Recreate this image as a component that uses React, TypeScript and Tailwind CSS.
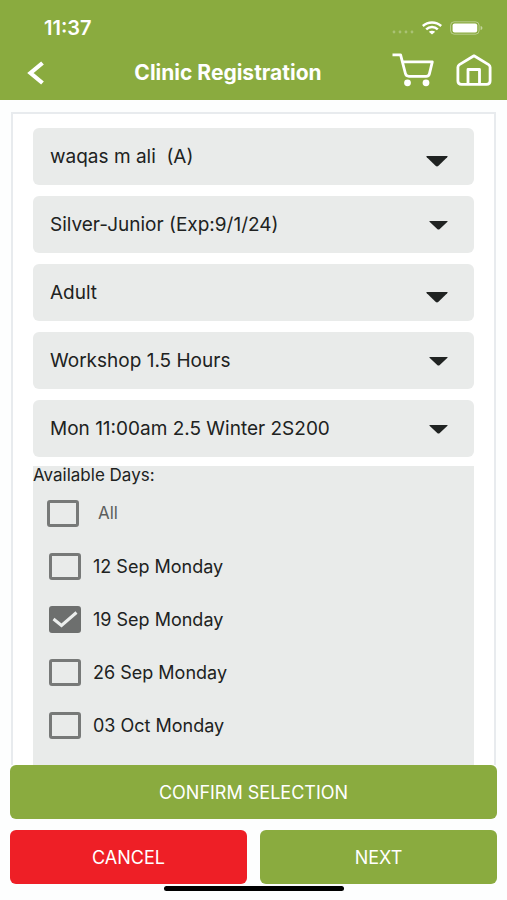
import { useState } from "react";

interface Field {
  id: string;
  label: string;
  value: string;
  bigArrow?: boolean;
}

const fields: Field[] = [
  { id: "member", label: "Member", value: "waqas m ali \u00a0(A)", bigArrow: true },
  { id: "membership", label: "Membership", value: "Silver-Junior (Exp:9/1/24)" },
  { id: "age", label: "Age group", value: "Adult", bigArrow: true },
  { id: "workshop", label: "Workshop", value: "Workshop 1.5 Hours" },
  { id: "session", label: "Session", value: "Mon 11:00am 2.5 Winter 2S200" },
];

const days = ["12 Sep Monday", "19 Sep Monday", "26 Sep Monday", "03 Oct Monday"];

const StatusBar = () => (
  <div className="flex items-center justify-between pl-11 pr-6 pt-4">
    <span className="text-[20px] leading-6 font-semibold">11:37</span>
    <div className="flex items-center gap-2">
      <svg width="22" height="14" viewBox="0 0 22 14" fill="#fff" fillOpacity="0.28">
        <circle cx="2" cy="11" r="1.4" />
        <circle cx="8" cy="11" r="1.4" />
        <circle cx="14" cy="11" r="1.4" />
        <circle cx="20" cy="11" r="1.4" />
      </svg>
      <svg width="20" height="14" viewBox="0 0 20 14" fill="none" stroke="#fff" strokeWidth="2.5">
        <path d="M0.8 5C6 0.3 14 0.3 19.2 5" />
        <path d="M4.2 8.4C7.6 5.2 12.4 5.2 15.8 8.4" />
        <path d="M10 13.5L6.8 10.8C8.6 9.3 11.4 9.3 13.2 10.8Z" fill="#fff" stroke="none" />
      </svg>
      <svg width="33" height="14" viewBox="0 0 33 14" fill="none">
        <rect x="0.6" y="0.8" width="28.5" height="12.4" rx="3.6" stroke="#fff" strokeOpacity="0.4" />
        <rect x="2.6" y="2.6" width="24.6" height="8.8" rx="2" fill="#fff" />
        <path d="M30.6 5v4c1.2-.4 1.8-1.1 1.8-2s-.6-1.6-1.8-2z" fill="#fff" fillOpacity="0.5" />
      </svg>
    </div>
  </div>
);

const Header = () => (
  <header className="bg-[#8aab3f] text-white">
    <StatusBar />
    <div className="flex items-center h-[60px] pl-5 pr-[15px] pt-[6px]">
      <button type="button" aria-label="Back" className="w-8 h-8 flex items-center justify-center">
        <svg width="18" height="24" viewBox="0 0 18 24" fill="none" stroke="#fff" strokeWidth="4.2">
          <path d="M15.5 2L3.5 12L15.5 22" />
        </svg>
      </button>
      <h1 className="flex-1 pl-3 text-center text-[21px] leading-6 font-bold">Clinic Registration</h1>
      <div className="flex items-center gap-5 mb-[6px]">
        <button type="button" aria-label="Cart">
          <svg width="44" height="34" viewBox="0 0 44 34" fill="none" stroke="#fff" strokeWidth="2.8" strokeLinejoin="round">
            <path d="M0.5 1.8H8.6L13.4 20.5Q14.1 23.3 17 23.3H34.2Q37 23.3 37.500 20.500L40.3 8.900H10.600" />
            <circle cx="15.5" cy="29.8" r="3.4" fill="#fff" stroke="none" />
            <circle cx="34" cy="29.8" r="3.4" fill="#fff" stroke="none" />
          </svg>
        </button>
        <button type="button" aria-label="Home">
          <svg width="36" height="32" viewBox="0 0 36 32" fill="none" stroke="#fff" strokeWidth="2.8" strokeLinejoin="round">
            <path d="M18 1.8L3.4 10.6Q1.9 11.6 1.9 13.3V27Q1.9 30.3 5.6 30.3H30.4Q34.1 30.3 34.1 27V13.3Q34.1 11.6 32.6 10.6Z" />
            <path d="M12 30V15.5H23.5V30" />
          </svg>
        </button>
      </div>
    </div>
  </header>
);

const SelectField = ({ field }: { field: Field }) => (
  <div className="relative">
    <select
      id={field.id}
      aria-label={field.label}
      className="appearance-none block w-full h-[57px] rounded-md bg-[#e9ebea] pt-[2px] pl-[17px] pr-14 text-[19px] text-[#202221]"
    >
      <option>{field.value}</option>
    </select>
    <div className="absolute inset-y-0 right-[26px] flex items-center pointer-events-none">
      {field.bigArrow ? (
        <svg width="22" height="20" viewBox="0 0 22 20" fill="#202322">
          <path d="M1 9H21Q22.4 9 21.2 10.2L12.2 19.1Q11 20 9.8 19.1L0.8 10.2Q-0.4 9 1 9Z" />
        </svg>
      ) : (
        <svg width="19" height="13" viewBox="0 0 19 13" fill="#202322">
          <path d="M1 3H18Q19.4 3 18.2 4.1L10.5 11.2Q9.5 12 8.5 11.2L0.8 4.1Q-0.4 3 1 3Z" />
        </svg>
      )}
    </div>
  </div>
);

interface DayCheckProps {
  label: string;
  checked: boolean;
  onChange: () => void;
}

const DayCheck = ({ label, checked, onChange }: DayCheckProps) => (
  <label className="flex items-center gap-3 h-[53px] pl-4 text-[18px] text-[#202221]">
    <span className="relative">
      <input
        type="checkbox"
        checked={checked}
        onChange={onChange}
        className="appearance-none block w-8 h-[27px] rounded-[3px] border-3 border-[#777978] checked:bg-[#6d6f6e] checked:border-[#6d6f6e]"
      />
      {checked && (
        <svg className="absolute inset-0 pointer-events-none" width="32" height="27" viewBox="0 0 32 27" fill="none" stroke="#eceeed" strokeWidth="3">
          <path d="M4.5 13L12.5 19.5L27.5 6.5" />
        </svg>
      )}
    </span>
    {label}
  </label>
);

export default function App() {
  const [selected, setSelected] = useState<string[]>(["19 Sep Monday"]);
  const allChecked = selected.length === days.length;

  const toggleDay = (day: string) => {
    setSelected((prev) =>
      prev.includes(day) ? prev.filter((d) => d !== day) : [...prev, day]
    );
  };

  return (
    <div
      className="min-h-screen flex flex-col bg-[#fdfefe]"
      style={{ fontFamily: "Inter, 'Liberation Sans', sans-serif" }}
    >
      <Header />
      <main className="flex-1 flex flex-col mx-[11px] mt-3 px-5 pt-[14px] bg-white border-2 border-b-0 border-[#e8ebee]">
        <div className="flex flex-col gap-[11px]">
          {fields.map((field) => (
            <SelectField key={field.id} field={field} />
          ))}
        </div>
        <fieldset className="flex-1 mt-[9px] bg-[#e9ebea]">
          <legend className="float-left w-full mb-[3px] text-[17px] leading-[18px] text-[#202221]">
            Available Days:
          </legend>
          <label className="clear-both flex items-center gap-[19px] h-[53px] pl-[14px] text-[17px] text-[#5c5e5d]">
            <input
              type="checkbox"
              checked={allChecked}
              onChange={() => setSelected(allChecked ? [] : days)}
              className="appearance-none block w-8 h-[27px] rounded-[3px] border-3 border-[#777978] checked:bg-[#6d6f6e]"
            />
            All
          </label>
          {days.map((day) => (
            <DayCheck
              key={day}
              label={day}
              checked={selected.includes(day)}
              onChange={() => toggleDay(day)}
            />
          ))}
        </fieldset>
      </main>
      <footer className="px-[10px] text-[18px] text-white">
        <button type="button" className="block w-full h-[54px] rounded-md bg-[#8aab3f]">
          CONFIRM SELECTION
        </button>
        <div className="grid grid-cols-2 gap-[13px] mt-[11px]">
          <button type="button" className="h-[54px] rounded-md bg-[#ee1f26]">CANCEL</button>
          <button type="button" className="h-[54px] rounded-md bg-[#8aab3f]">NEXT</button>
        </div>
        {/* home indicator */}
        <div className="w-[180px] h-[5px] mx-auto mt-[2px] mb-[9px] rounded-full bg-black" />
      </footer>
    </div>
  );
}
